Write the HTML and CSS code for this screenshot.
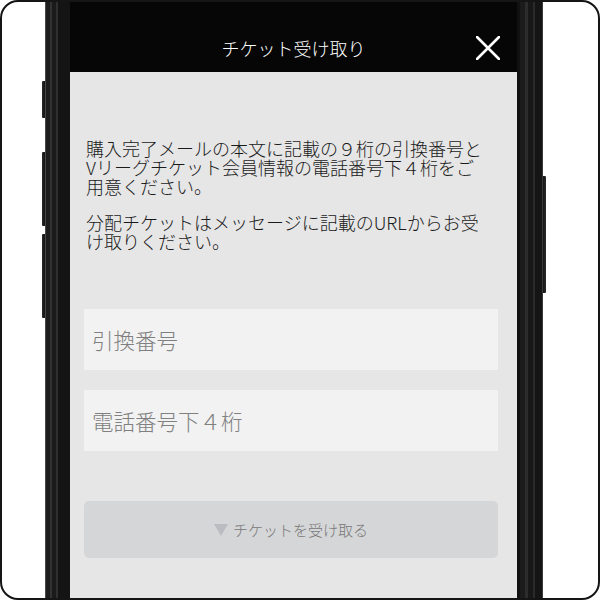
FILE: index.html
```html
<!DOCTYPE html>
<html lang="ja">
<head>
<meta charset="utf-8">
<title>チケット受け取り</title>
<link rel="stylesheet" href="styles.css">
</head>
<body>
<div class="card">
  <div class="rail rail-left">
    <div class="side-btn b1"></div>
    <div class="side-btn b2"></div>
    <div class="side-btn b3"></div>
  </div>
  <div class="phone">
    <div class="screen">
      <header class="bar">
        <span></span>
        <h1 class="title">チケット受け取り</h1>
        <button class="close" aria-label="閉じる">
          <svg width="24" height="24" viewBox="0 0 24 24"><path d="M1 1L23 23M23 1L1 23" stroke="#fff" stroke-width="2.6" stroke-linecap="round" fill="none"/></svg>
        </button>
      </header>
      <main class="content">
        <p class="msg">購入完了メールの本文に記載の９桁の引換番号とVリーグチケット会員情報の電話番号下４桁をご用意ください。</p>
        <p class="msg">分配チケットはメッセージに記載のURLからお受け取りください。</p>
        <div class="fields">
          <input class="field" type="text" placeholder="引換番号">
          <input class="field" type="text" placeholder="電話番号下４桁">
        </div>
        <button class="submit"><span class="tri"></span>チケットを受け取る</button>
      </main>
    </div>
  </div>
  <div class="rail rail-right">
    <div class="side-btn b4"></div>
  </div>
</div>
</body>
</html>
```

FILE: styles.css
```css
html, body {
  margin: 0;
  padding: 0;
  background: #fff;
}
body {
  font-family: "Noto Sans CJK JP", "Noto Sans", sans-serif;
}
.card {
  width: 600px;
  height: 600px;
  box-sizing: border-box;
  border: 2px solid #151515;
  border-radius: 18px;
  overflow: hidden;
  background: #fff;
  display: flex;
  padding-left: 40px;
}
.rail {
  width: 3px;
  flex-shrink: 0;
  display: flex;
  flex-direction: column;
}
.side-btn {
  width: 3px;
  background: linear-gradient(to right, #2a2a2a, #151515);
  border-radius: 1px 0 0 1px;
}
.rail-right .side-btn {
  border-radius: 0 1px 1px 0;
  background: linear-gradient(to right, #151515, #2a2a2a);
}
.b1 { margin-top: 79px; height: 37px; }
.b2 { margin-top: 34px; height: 74px; }
.b3 { margin-top: 8px; height: 84px; }
.b4 { margin-top: 174px; height: 117px; }

.phone {
  width: 498px;
  height: 640px;
  flex-shrink: 0;
  box-sizing: border-box;
  padding: 0 26px 0 25px;
  display: flex;
  background: linear-gradient(to right,
    #4a4a4a 0, #4a4a4a 1px,
    #1d1d1d 1px, #1d1d1d 5px,
    #323232 5px, #323232 7px,
    #1a1a1a 7px, #1a1a1a 11px,
    #2f2f2f 11px, #2f2f2f 13px,
    #141414 13px, #141414 25px,
    #0c0c0c 25px, #0c0c0c calc(100% - 26px),
    #111 calc(100% - 26px), #111 calc(100% - 23px),
    #1b1b1b calc(100% - 23px), #1b1b1b calc(100% - 18px),
    #2c2c2c calc(100% - 18px), #2c2c2c calc(100% - 15px),
    #181818 calc(100% - 15px), #181818 calc(100% - 10px),
    #2a2a2a calc(100% - 10px), #2a2a2a calc(100% - 8px),
    #151515 calc(100% - 8px), #151515 calc(100% - 1px),
    #3a3a3a calc(100% - 1px));
}
.screen {
  width: 447px;
  background: #e6e6e6;
  display: flex;
  flex-direction: column;
}
.bar {
  height: 70px;
  box-sizing: border-box;
  padding-top: 21px;
  background: #060606;
  display: grid;
  grid-template-columns: 1fr auto 1fr;
  align-items: center;
}
.title {
  margin: 0;
  color: #fff;
  font-size: 18px;
  font-weight: 300;
  line-height: 20px;
}
.close {
  justify-self: end;
  margin: 0 17px 0 0;
  padding: 0;
  border: 0;
  background: transparent;
  width: 24px;
  height: 24px;
  display: flex;
}
.content {
  padding: 67px 19px 0 14px;
  display: flex;
  flex-direction: column;
}
.msg {
  margin: 0 0 17px 0;
  padding: 0 10px 0 2px;
  font-size: 18px;
  font-weight: 300;
  line-height: 19px;
  color: #1a1a1a;
}
.msg + .msg {
  margin-bottom: 0;
}
.fields {
  margin-top: 58px;
  display: flex;
  flex-direction: column;
  gap: 20px;
}
.field {
  display: block;
  width: 100%;
  height: 61px;
  box-sizing: border-box;
  border: 0;
  outline: 0;
  background: #f2f2f2;
  padding: 0 0 0 8px;
  font-family: "Noto Sans CJK JP", "Noto Sans", sans-serif;
  font-size: 21.5px;
  font-weight: 300;
  color: #333;
}
.field::placeholder {
  color: #808080;
}
.submit {
  margin-top: 50px;
  height: 57px;
  border: 0;
  border-radius: 5px;
  background: #d5d6d8;
  display: flex;
  align-items: center;
  justify-content: center;
  font-family: "Noto Sans CJK JP", "Noto Sans", sans-serif;
  font-size: 15px;
  font-weight: 300;
  color: #777;
  padding: 0;
}
.tri {
  width: 0;
  height: 0;
  border-left: 7.5px solid transparent;
  border-right: 7.5px solid transparent;
  border-top: 12px solid #bbbcc2;
  margin-right: 5px;
  margin-top: 1px;
}
```
